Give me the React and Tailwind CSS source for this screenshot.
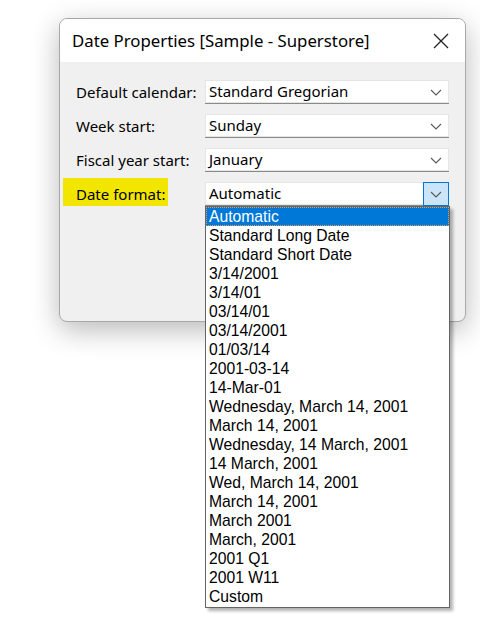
import React from 'react';

const rows = [
  { label: 'Default calendar:', value: 'Standard Gregorian' },
  { label: 'Week start:', value: 'Sunday' },
  { label: 'Fiscal year start:', value: 'January' },
];

const formats = [
  'Automatic',
  'Standard Long Date',
  'Standard Short Date',
  '3/14/2001',
  '3/14/01',
  '03/14/01',
  '03/14/2001',
  '01/03/14',
  '2001-03-14',
  '14-Mar-01',
  'Wednesday, March 14, 2001',
  'March 14, 2001',
  'Wednesday, 14 March, 2001',
  '14 March, 2001',
  'Wed, March 14, 2001',
  'March 14, 2001',
  'March 2001',
  'March, 2001',
  '2001 Q1',
  '2001 W11',
  'Custom',
];

function Chevron() {
  return (
    <svg width="12" height="7" viewBox="0 0 12 7" fill="none">
      <path d="M1 1l5 5 5-5" stroke="#5a5a5a" strokeWidth="1.1" />
    </svg>
  );
}

function Select({ value, open }) {
  return (
    <div className="relative flex h-[24px] w-[244px] items-center bg-white border-b border-[#8a8a8a] shadow-[inset_0_0_0_1px_#e5e5e5]">
      <span className="pl-[4px] text-[15px] text-black">{value}</span>
      {open ? (
        <div className="absolute right-0 top-0 flex h-[24px] w-[26px] items-center justify-center border border-[#0078d7] bg-[#cce4f7]">
          <Chevron />
        </div>
      ) : (
        <div className="absolute right-[7px] top-[9px]">
          <Chevron />
        </div>
      )}
    </div>
  );
}

export default function App() {
  return (
    <div className="relative h-[628px] w-[480px] overflow-hidden bg-white font-['Noto_Sans',sans-serif]">
      <div className="ml-[59px] mt-[18px] w-[407px] h-[304px] overflow-hidden rounded-[8px] border border-[#a8a8a8] bg-[#f0f0f0] shadow-[0_8px_28px_rgba(0,0,0,0.28)]">
        <div className="flex h-[43px] items-center justify-between bg-white pl-[12px] pr-[16px]">
          <span className="text-[16.8px] text-black">Date Properties [Sample - Superstore]</span>
          <svg width="16" height="16" viewBox="0 0 16 16" fill="none">
            <path d="M1 1l14 14M15 1L1 15" stroke="#222" strokeWidth="1.3" />
          </svg>
        </div>
        <div className="flex flex-col gap-[10px] pl-[3px] pt-[18px]">
          {rows.map((r) => (
            <div key={r.label} className="flex h-[24px] items-center">
              <span className="w-[142px] pl-[13px] text-[15px] text-black">{r.label}</span>
              <Select value={r.value} />
            </div>
          ))}
          <div className="flex h-[24px] items-center">
            <div className="h-[24px] w-[142px]">
              <span className="-mt-[4px] flex h-[28px] w-[105px] items-center bg-[#f2e600] pl-[13px] pt-[4px] text-[15px] text-black">
                Date format:
              </span>
            </div>
            <Select value="Automatic" open />
          </div>
        </div>
      </div>

      <div className="absolute left-[205px] top-[206px] w-[245px] border border-[#646464] bg-white pb-[1px] shadow-[3px_3px_3px_rgba(0,0,0,0.3)] font-['Liberation_Sans',sans-serif]">
        {formats.map((f, i) => (
          <div
            key={i}
            className={
              i === 0
                ? 'h-[19px] border border-dotted border-[#e8a050] bg-[#0078d7] pl-[2px] text-[15.7px] leading-[17px] text-white'
                : 'h-[19px] pl-[3px] text-[15.7px] leading-[19px] text-black'
            }
          >
            {f}
          </div>
        ))}
      </div>
    </div>
  );
}
